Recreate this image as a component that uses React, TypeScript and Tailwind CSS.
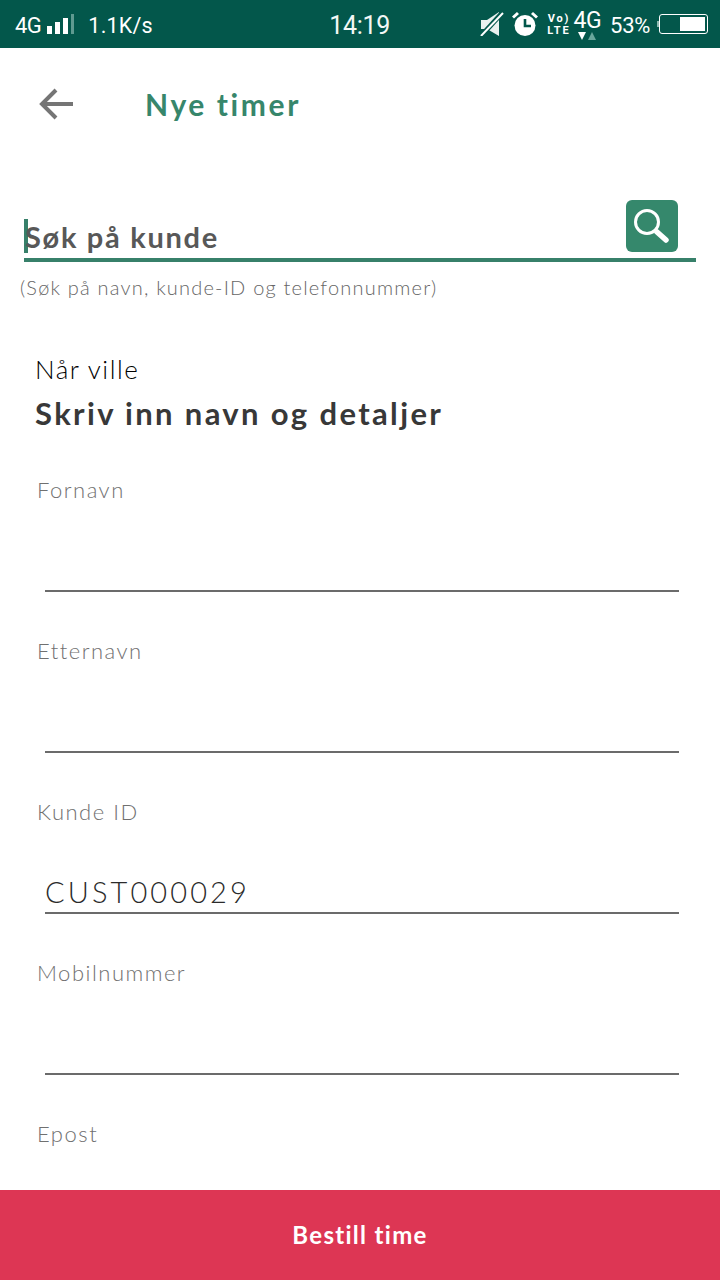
const fontBody = "font-['Lato','Noto_Sans',sans-serif]";

function StatusBar() {
	return (
		<div className="flex h-12 shrink-0 items-center bg-[#03574b] pl-[15px] pr-3 font-['Roboto',sans-serif] text-white">
			<div className="flex flex-1 items-center">
				<span className="mt-1 text-[22px] leading-6 tracking-[-0.5px]">4G</span>
				<div className="ml-1.5 flex h-5 items-end gap-[3px]">
					<div className="h-2 w-[5px] bg-white" />
					<div className="h-3 w-[5px] bg-white" />
					<div className="h-4 w-[5px] bg-white" />
					<div className="h-5 w-[3px] bg-[#5f9a90]" />
				</div>
				<span className="ml-3.5 mt-1 text-[21.5px] leading-6 tracking-[0.2px]">1.1K/s</span>
			</div>
			<span className="-ml-1 mt-1 text-[25px] leading-6 tracking-[-0.3px] text-[#f2f7f6]">14:19</span>
			<div className="flex flex-1 items-center justify-end">
				<svg width="24" height="24" viewBox="0 0 24 24" className="mr-2">
					<path d="M1 8h6l12-8v24L7 17H1z" fill="#e9f1ef" />
					<path d="M1 24L23 0" stroke="#03574b" strokeWidth="5" />
					<path d="M1 24L23 1" stroke="#fff" strokeWidth="2" />
				</svg>
				<svg width="26" height="26" viewBox="0 0 26 26" className="mr-[9px]">
					<circle cx="13" cy="14.5" r="10.5" fill="#fff" />
					<path d="M13 8v7h6" stroke="#03574b" strokeWidth="2.6" fill="none" />
					<path d="M1 6.5L6 2M25 6.5L20 2" stroke="#fff" strokeWidth="3" />
				</svg>
				<div className="mr-[3px] flex flex-col items-center gap-px text-[11px] font-bold leading-[11px] tracking-[1.8px]">
					<span className="h-[11px]">Vo)</span>
					<span className="h-[11px]">LTE</span>
				</div>
				<div className="mr-[9px] flex flex-col items-center">
					<span className="mt-0.5 text-[23px] leading-[22px] tracking-[-0.5px]">4G</span>
					<svg width="22" height="8" viewBox="0 0 22 8">
						<path d="M2 0h8L6 8z" fill="#fff" />
						<path d="M12 8h8l-4-8z" fill="#6aa79c" />
					</svg>
				</div>
				<span className="mr-[7px] mt-1 text-[22px] leading-6 tracking-[-0.3px]">53%</span>
				<div className="h-1.5 w-0.5 bg-[#8db8b0]" />
				<div className="flex h-5 w-[49px] justify-end rounded-[3px] border border-white p-0.5">
					<div className="h-full w-[25px] bg-white" />
				</div>
			</div>
		</div>
	);
}

function Field({ label, value }: { label: string; value?: string }) {
	return (
		<div className="flex h-[161px] shrink-0 flex-col">
			<span className="ml-[37px] mt-[5px] text-[22px] font-light leading-7 tracking-[1.5px] text-[#707070]">{label}</span>
			<div className="ml-[45px] mr-[41px] mt-[50px] flex h-[38px] items-end border-b-2 border-[#6b6b6b] pb-0.5">
				{value && <span className="text-[29px] font-light leading-9 tracking-[3.1px] text-[#2b2b2b]">{value}</span>}
			</div>
		</div>
	);
}

export default function App() {
	return (
		<div className={`flex h-[1280px] w-[720px] flex-col overflow-hidden bg-white ${fontBody}`}>
			<StatusBar />
			<div className="flex h-28 shrink-0 items-center pl-[38px]">
				<svg width="36" height="34" viewBox="0 0 36 34" fill="none" stroke="#757575" strokeWidth="4">
					<path d="M35 17H5M18 3L4 17l14 14" />
				</svg>
				<h1 className="ml-[71px] text-[30px] font-bold leading-9 tracking-[2.6px] text-[#37866b]">Nye timer</h1>
			</div>
			<div className="mx-6 mt-10 flex h-[62px] shrink-0 items-end justify-between border-b-4 border-[#37806a]">
				<div className="mb-[5px] flex h-[34px] items-center border-l-4 border-[#37806a]">
					<span className="-ml-[3px] mt-0.5 text-[29px] font-bold leading-8 tracking-[1.7px] text-[#585858]">Søk på kunde</span>
				</div>
				<div className="mb-[6px] mr-[18px] flex h-[52px] w-[52px] items-center justify-center rounded-md bg-[#35886c]">
					<svg width="40" height="40" viewBox="0 0 40 40" fill="none" stroke="#fff">
						<circle cx="15" cy="16" r="11.5" strokeWidth="3" />
						<path d="M25 26l9 8" strokeWidth="5.5" strokeLinecap="round" />
					</svg>
				</div>
			</div>
			<p className="ml-5 mt-[13px] shrink-0 text-[20px] font-light leading-6 tracking-[1.2px] text-[#666666]">
				(Søk på navn, kunde-ID og telefonnummer)
			</p>
			<p className="ml-[35px] mt-[54px] shrink-0 text-[26px] font-light leading-8 tracking-[1.5px] text-black">Når ville</p>
			<h2 className="ml-[35px] mt-[10px] shrink-0 text-[31px] font-bold leading-9 tracking-[2.35px] text-[#383838]">
				Skriv inn navn og detaljer
			</h2>
			<div className="mt-[40px] flex min-h-0 flex-1 flex-col overflow-hidden">
				<Field label="Fornavn" />
				<Field label="Etternavn" />
				<Field label="Kunde ID" value="CUST000029" />
				<Field label="Mobilnummer" />
				<Field label="Epost" />
			</div>
			<button className="flex h-[90px] w-full shrink-0 items-center justify-center bg-[#dd3654] text-[24px] font-bold tracking-[1.3px] text-white">
				Bestill time
			</button>
		</div>
	);
}
